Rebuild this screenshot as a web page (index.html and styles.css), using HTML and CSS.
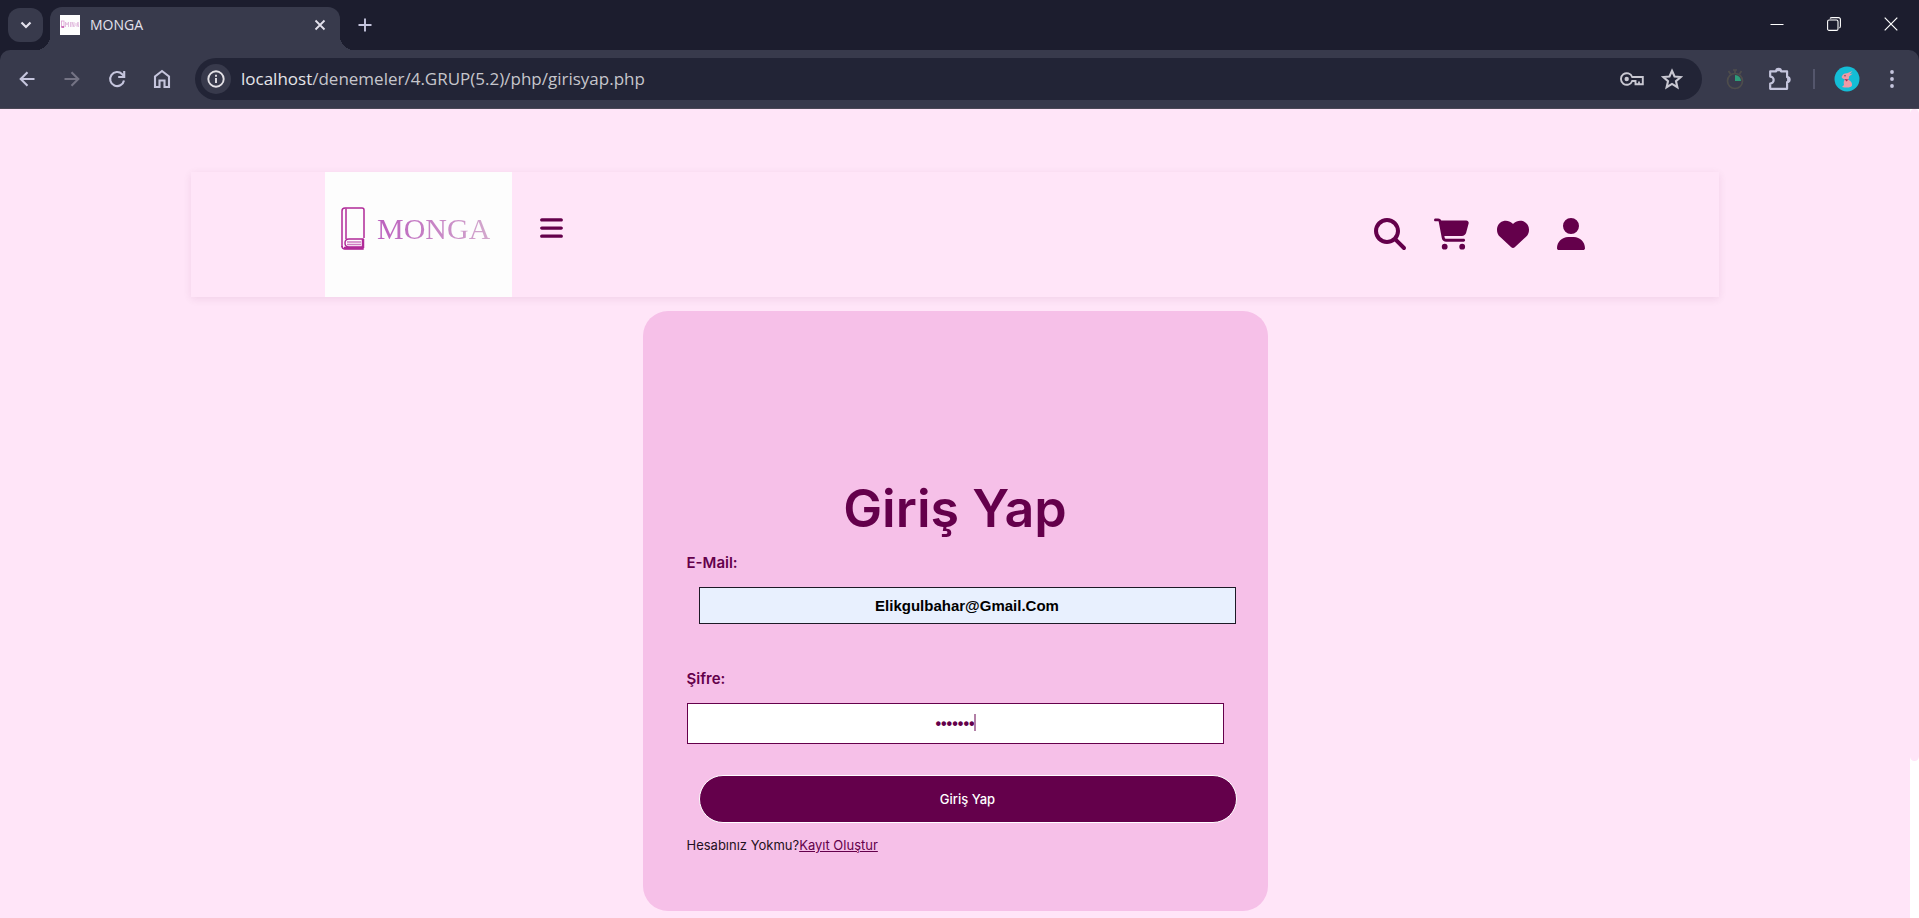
FILE: index.html
```html
<!DOCTYPE html>
<html lang="tr">
<head>
<meta charset="utf-8">
<title>MONGA</title>
<link rel="stylesheet" href="styles.css">
</head>
<body>
<div class="browser">
  <div class="tab-strip">
    <button class="tab-search" type="button" aria-label="Sekmelerde ara">
      <svg width="12" height="12" viewBox="0 0 12 12"><path d="M1.500 3.500L6 8l4.500-4.500" fill="none" stroke="currentColor" stroke-width="2.200"/></svg>
    </button>
    <div class="tab">
      <svg class="favicon" width="20" height="20" viewBox="0 0 20 20">
        <rect width="20" height="20" fill="#fdfdfd"/>
        <rect x="1.500" y="6" width="2.500" height="6" fill="none" stroke="#d99bd0" stroke-width=".8"/>
        <path d="M1.500 12h2.500" stroke="#b8329b" stroke-width="1.200"/>
        <path d="M5.500 12V7l1.500 3 1.500-3v5M10.500 7v5M12 12V7l2 5V7M16 8v3M17 12l1-5 .6 5" fill="none" stroke="#dcb0d8" stroke-width=".8"/>
      </svg>
      <span class="tab-title">MONGA</span>
      <button class="tab-close" type="button" aria-label="Sekmeyi kapat">
        <svg width="12" height="12" viewBox="0 0 12 12"><path d="M1.500 1.500l9 9M10.500 1.500l-9 9" stroke="currentColor" stroke-width="1.800"/></svg>
      </button>
    </div>
    <button class="new-tab" type="button" aria-label="Yeni sekme">
      <svg width="14" height="14" viewBox="0 0 14 14"><path d="M7 .5v13M.5 7h13" stroke="currentColor" stroke-width="1.900"/></svg>
    </button>
    <div class="window-controls">
      <button type="button" aria-label="Küçült"><svg width="14" height="14" viewBox="0 0 14 14"><path d="M.5 7.500h13" stroke="currentColor"/></svg></button>
      <button type="button" aria-label="Geri yükle"><svg width="14" height="14" viewBox="0 0 14 14" fill="none" stroke="currentColor" stroke-width="1.100"><rect x=".6" y="3" width="10.400" height="10.400" rx="1.500"/><path d="M3 1.500Q3.500.6 5 .6h6.400q2 0 2 2V9q0 1.500-1 2"/></svg></button>
      <button type="button" aria-label="Kapat"><svg width="14" height="14" viewBox="0 0 14 14"><path d="M.7.7l12.600 12.600M13.300.7L.7 13.300" stroke="currentColor" stroke-width="1.200"/></svg></button>
    </div>
  </div>

  <div class="toolbar">
    <button class="tool" type="button" aria-label="Geri"><svg width="16" height="16" viewBox="0 0 16 16" fill="none" stroke="currentColor" stroke-width="2.100"><path d="M15.500 8H2M8.500 1.200L1.700 8l6.800 6.800"/></svg></button>
    <button class="tool tool-off" type="button" aria-label="İleri" disabled><svg width="16" height="16" viewBox="0 0 16 16" fill="none" stroke="currentColor" stroke-width="2.100"><path d="M.5 8H14M7.500 1.200L14.300 8l-6.800 6.800"/></svg></button>
    <button class="tool" type="button" aria-label="Yenile"><svg width="18" height="18" viewBox="0 0 18 18" fill="none" stroke="currentColor" stroke-width="2.100"><path d="M16 10.500A7 7 0 1 1 14.200 4.200L16 6"/><path d="M16.200 1v6h-6"/></svg></button>
    <button class="tool" type="button" aria-label="Ana sayfa"><svg width="18" height="20" viewBox="0 0 18 20" fill="none" stroke="currentColor" stroke-width="2.100"><path d="M2 18V7.500L9 2l7 5.500V18h-4.500v-6.500h-5V18z"/></svg></button>
    <div class="omnibox">
      <button class="site-info" type="button" aria-label="Site bilgileri"><svg width="18" height="18" viewBox="0 0 18 18"><circle cx="9" cy="9" r="7.700" fill="none" stroke="currentColor" stroke-width="1.900"/><path d="M9 8v5M9 4.800v2" stroke="currentColor" stroke-width="1.900"/></svg></button>
      <div class="address"><span class="host">localhost</span>/denemeler/4.GRUP(5.2)/php/girisyap.php</div>
      <button class="omni-icon" type="button" aria-label="Şifreler"><svg width="24" height="14" viewBox="0 0 24 14"><path d="M12.200 5A5.800 5.800 0 1 0 12.200 9H15.500V12.200H22.800V5z" fill="none" stroke="currentColor" stroke-width="1.900"/><circle cx="6.700" cy="7" r="2.200" fill="currentColor"/><path d="M19 12V9.500" stroke="currentColor" stroke-width="1.800"/></svg></button>
      <button class="omni-icon" type="button" aria-label="Yer işareti ekle"><svg width="22" height="22" viewBox="0 0 20 20"><path d="M10 2.500l2.300 5.200 5.600.5-4.300 3.700 1.300 5.600-4.900-3-4.900 3 1.300-5.600L2.100 8.200l5.600-.5z" fill="none" stroke="currentColor" stroke-width="1.900"/></svg></button>
    </div>
    <button class="tool" type="button" aria-label="Zamanlayıcı"><svg width="18" height="22" viewBox="0 0 18 22"><g fill="none" stroke="#4e4d4c" stroke-width="1.700"><circle cx="9" cy="13" r="7.500"/><path d="M9 2v4M7 2h4M2.500 3l2 3M15.500 3l-2 3"/></g><path d="M9 13V7a6 6 0 0 1 6 6z" fill="#2e9c78"/></svg></button>
    <button class="tool" type="button" aria-label="Uzantılar"><svg width="24" height="24" viewBox="0 0 22 22"><path d="M2 4h5.500a2.200 2.200 0 0 1 4.400 0H17.500V9.300a2.300 2.300 0 0 1 0 4.600V20H2V15.200a3.200 3.200 0 0 0 0-6.400z" fill="none" stroke="currentColor" stroke-width="2" stroke-linejoin="round"/><path d="M7.500 4a2.200 2.200 0 0 1 4.400 0M17.500 9.300a2.300 2.300 0 0 1 0 4.600" fill="currentColor" stroke="currentColor"/></svg></button>
    <span class="divider"></span>
    <button class="tool" type="button" aria-label="Profil"><svg width="26" height="26" viewBox="0 0 26 26"><circle cx="13" cy="13" r="12.500" fill="#14bdd6"/><g fill="#ee9aa6"><path d="M9 8.500Q11 7 13 7.200L18.500 5 15.500 8.200 18.800 7.500 15 10.500Q15.500 12.500 14 13.500 18.500 15.500 18 19.500 17 22 10.500 21.500L8 21 10 19Q9 15 11 13.500 8 12.500 7.500 11z"/></g><path d="M10.500 13l4 .5-2 2z" fill="#a52d55"/><circle cx="11" cy="9.800" r=".7" fill="#5b3340"/></svg></button>
    <button class="tool" type="button" aria-label="Menü"><svg width="6" height="20" viewBox="0 0 6 20" fill="currentColor"><circle cx="3" cy="3" r="1.900"/><circle cx="3" cy="10" r="1.900"/><circle cx="3" cy="17" r="1.900"/></svg></button>
  </div>

  <div class="viewport">
    <div class="page">
      <header class="site-header">
        <a class="logo" href="#" aria-label="MONGA ana sayfa">
          <svg width="24" height="43" viewBox="0 0 24 43" fill="none" stroke="#b02a98" stroke-width="1.500">
            <path d="M1 40V4q0-3 3-3h17q2 0 2 2v28"/>
            <path d="M5 1.500V32"/>
            <path d="M1 39q0 3 3 3h18V32H8q-4 0-4 4t4 4h14"/>
            <path d="M22 32v9" stroke-width="2.500"/>
            <path d="M3 41h19" stroke-width="2.500"/>
            <path d="M6 35h14M6 37.500h14" stroke="#cf7ac2"/>
          </svg>
          <span class="wordmark">MONGA</span>
        </a>
        <button class="burger" type="button" aria-label="Menüyü aç"><svg width="23" height="26" viewBox="0 0 448 512" fill="currentColor"><path d="M0 96C0 78.300 14.300 64 32 64H416c17.700 0 32 14.300 32 32s-14.300 32-32 32H32C14.300 128 0 113.700 0 96zM0 256c0-17.700 14.300-32 32-32H416c17.700 0 32 14.300 32 32s-14.300 32-32 32H32c-17.700 0-32-14.300-32-32zM448 416c0 17.700-14.300 32-32 32H32c-17.700 0-32-14.300-32-32s14.300-32 32-32H416c17.700 0 32 14.300 32 32z"/></svg></button>
        <nav class="actions">
          <a href="#" aria-label="Ara"><svg width="32" height="32" viewBox="0 0 512 512" fill="currentColor"><path d="M416 208c0 45.900-14.900 88.300-40 122.700L502.600 457.400c12.500 12.500 12.500 32.800 0 45.300s-32.800 12.500-45.300 0L330.700 376c-34.400 25.200-76.800 40-122.700 40C93.100 416 0 322.900 0 208S93.100 0 208 0S416 93.100 416 208zM208 352a144 144 0 1 0 0-288 144 144 0 1 0 0 288z"/></svg></a>
          <a href="#" aria-label="Sepet"><svg width="35" height="32" viewBox="0 0 576 512" fill="currentColor"><path d="M0 24C0 10.700 10.700 0 24 0H69.500c22 0 41.500 12.800 50.600 32h411c26.300 0 45.500 25 38.600 50.400l-41 152.300c-8.500 31.400-37 53.300-69.500 53.300H170.700l5.400 28.500c2.200 11.300 12.100 19.500 23.600 19.500H488c13.300 0 24 10.700 24 24s-10.700 24-24 24H199.700c-34.600 0-64.300-24.600-70.700-58.500L77.400 54.500c-.7-3.800-4-6.500-7.900-6.500H24C10.700 48 0 37.300 0 24zM128 464a48 48 0 1 1 96 0 48 48 0 1 1-96 0zm336-48a48 48 0 1 1 0 96 48 48 0 1 1 0-96z"/></svg></a>
          <a href="#" aria-label="Favoriler"><svg width="32" height="32" viewBox="0 0 512 512" fill="currentColor"><path d="M47.600 300.400L228.300 469.100c7.500 7 17.400 10.900 27.700 10.900s20.200-3.900 27.700-10.900L464.400 300.400c30.400-28.300 47.600-68 47.600-109.500v-5.800c0-69.900-50.500-129.500-119.400-141C347 36.500 300.600 51.400 268 84L256 96 244 84c-32.600-32.600-79-47.500-124.600-39.900C50.500 55.600 0 115.200 0 185.100v5.800c0 41.500 17.200 81.200 47.600 109.500z"/></svg></a>
          <a href="#" aria-label="Hesabım"><svg width="28" height="32" viewBox="0 0 448 512" fill="currentColor"><path d="M224 256A128 128 0 1 0 224 0a128 128 0 1 0 0 256zm-45.700 48C79.800 304 0 383.800 0 482.300C0 498.700 13.300 512 29.700 512H418.300c16.400 0 29.700-13.300 29.700-29.700C448 383.800 368.200 304 269.700 304H178.300z"/></svg></a>
        </nav>
      </header>

      <form class="login">
        <h1>Giriş Yap</h1>
        <label for="email">E-Mail:</label>
        <input class="email" id="email" type="text" value="Elikgulbahar@Gmail.Com">
        <label for="password">Şifre:</label>
        <div class="password-field">
          <input class="password" id="password" type="password" value="1234567">
          <span class="caret"></span>
        </div>
        <button class="submit" type="button">Giriş Yap</button>
        <p class="signup">Hesabınız Yokmu?<a href="#">Kayıt Oluştur</a></p>
      </form>
    </div>
    <div class="scroll-track"><div class="scroll-thumb"></div></div>
  </div>
</div>
</body>
</html>
```
FILE: styles.css
```css
* {
  box-sizing: border-box;
}

body {
  margin: 0;
  background: #ffe5f8;
  font-family: Inter, "Open Sans", sans-serif;
}

button {
  margin: 0;
  padding: 0;
  border: 0;
  background: none;
  color: inherit;
  font-family: inherit;
}

svg {
  display: block;
}

.browser {
  display: flex;
  flex-direction: column;
  min-height: 100vh;
  background: #1c1d2e;
}

/* Tab strip */
.tab-strip {
  display: flex;
  height: 50px;
  color: #e3e1ec;
}

.tab-search {
  display: grid;
  place-items: center;
  width: 35px;
  height: 34px;
  margin: 8px 7px 0 8px;
  border-radius: 12px;
  background: #383a4c;
}

.tab {
  position: relative;
  display: flex;
  align-items: center;
  width: 290px;
  margin-top: 7px;
  padding: 0 12px 8px 10px;
  border-radius: 12px 12px 0 0;
  background: #383a4c;
}

.tab::before,
.tab::after {
  content: "";
  position: absolute;
  bottom: 0;
  width: 14px;
  height: 14px;
}

.tab::before {
  right: 100%;
  background: radial-gradient(circle at 0 0, transparent 14px, #383a4c 14px);
}

.tab::after {
  left: 100%;
  background: radial-gradient(circle at 100% 0, transparent 14px, #383a4c 14px);
}

.tab-title {
  flex: 1;
  margin-left: 10px;
  font: 14px/20px "Open Sans", "Noto Sans", sans-serif;
}

.tab-close {
  display: grid;
  place-items: center;
  width: 16px;
  height: 16px;
}

.new-tab {
  display: grid;
  place-items: center;
  width: 50px;
  color: #c5c5dd;
}

.window-controls {
  display: flex;
  height: 48px;
  margin-left: auto;
  color: #fff;
}

.window-controls button {
  display: grid;
  place-items: center;
  width: 57px;
}

/* Toolbar */
.toolbar {
  display: flex;
  align-items: center;
  gap: 9px;
  height: 59px;
  padding: 0 9px;
  border-bottom: 1px solid #4b4856;
  border-radius: 10px 10px 0 0;
  background: #383a4c;
  color: #c5c5dd;
}

.tool {
  display: grid;
  place-items: center;
  width: 36px;
  height: 36px;
}

.tool-off {
  color: #747384;
}

.omnibox {
  display: flex;
  flex: 1;
  align-items: center;
  height: 42px;
  margin: 0 6px;
  padding: 0 10px 0 6px;
  border-radius: 21px;
  background: #222436;
}

.site-info {
  display: grid;
  place-items: center;
  width: 30px;
  height: 30px;
  margin-right: 10px;
  border-radius: 15px;
  background: #383a4c;
  color: #e3e1e6;
}

.address {
  flex: 1;
  color: #c6c6cc;
  font: 17px/24px "Open Sans", "Noto Sans", sans-serif;
}

.host {
  color: #e6e6ea;
}

.omni-icon {
  display: grid;
  place-items: center;
  width: 40px;
  height: 30px;
  color: #c9c8d2;
}

.divider {
  width: 13px;
  height: 20px;
  background: linear-gradient(#54566c, #54566c) center / 2px 20px no-repeat;
}

/* Page */
.viewport {
  display: flex;
  flex: 1;
}

.page {
  flex: 1;
  padding: 63px 0 7px;
  background: #ffe5f8;
}

.scroll-track {
  width: 9px;
  background: #fff;
}

.scroll-thumb {
  height: 652px;
  border-radius: 5px;
  background: #ffe5f8;
}

.site-header {
  display: flex;
  align-items: center;
  width: 80%;
  height: 125px;
  margin: 0 auto 14px;
  padding: 0 134px;
  box-shadow: 0 2px 8px rgba(100, 0, 75, 0.09);
  color: #64004b;
}

.logo {
  display: flex;
  align-items: center;
  gap: 12px;
  width: 187px;
  height: 125px;
  padding: 0 0 12px 16px;
  background: #fdfdfd;
  text-decoration: none;
}

.wordmark {
  background: linear-gradient(90deg, #bb5fbe, #d3a9cd);
  background-clip: text;
  color: transparent;
  font: 30px/42px "Liberation Serif", serif;
}

.burger {
  margin-left: 28px;
  padding-bottom: 14px;
}

.actions {
  display: flex;
  gap: 28px;
  margin-left: auto;
  padding-bottom: 2px;
}

.actions a {
  color: inherit;
}

/* Login card */
.login {
  display: flex;
  flex-direction: column;
  width: 625px;
  max-width: 100%;
  margin: 0 auto;
  padding: 160px 44px 56px;
  border-radius: 25px;
  background: #f6c0e8;
  color: #64004b;
}

.login h1 {
  margin: 0 0 5px;
  font-size: 52px;
  font-weight: 600;
  line-height: 75px;
  text-align: center;
}

.login label {
  margin-bottom: 12px;
  font-size: 15px;
  font-weight: 600;
  line-height: 24px;
}

.login input {
  padding: 0 10px;
  border: 1px solid #64004b;
  border-radius: 0;
  outline: 0;
  text-align: center;
}

.login .email {
  height: 37px;
  margin: 0 -12px 43px 12px;
  border-color: #1d1a26;
  background: #e8f0fe;
  color: #000;
  font: bold 15px "Liberation Sans", Arial, sans-serif;
}

.password-field {
  position: relative;
  margin-bottom: 31px;
}

.login .password {
  display: block;
  width: 100%;
  height: 41px;
  background: #fff;
  color: #64004b;
  font: bold 16px "Liberation Sans", Arial, sans-serif;
}

.caret {
  position: absolute;
  top: 11px;
  left: calc(50% + 19px);
  width: 2px;
  height: 17px;
  background: #b27fa6;
}

.submit {
  height: 48px;
  margin: 0 -13px 12px 12px;
  border: 1px solid #fff;
  border-radius: 24px;
  background: #64004b;
  color: #fff;
  font-size: 13px;
  font-weight: 500;
}

.signup {
  margin: 0;
  color: #1f1020;
  font-size: 13px;
  line-height: 20px;
}

.signup a {
  color: #64004b;
}
```
